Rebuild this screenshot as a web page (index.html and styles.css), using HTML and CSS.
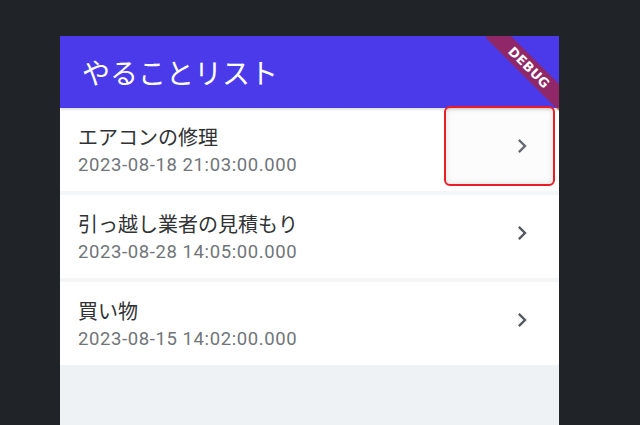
FILE: index.html
```html
<!DOCTYPE html>
<html lang="ja">
<head>
    <meta charset="UTF-8">
    <meta name="viewport" content="width=device-width, initial-scale=1.0">
    <title>やることリスト</title>
    <link rel="stylesheet" href="styles.css">
</head>
<body>

<div class="phone">
    <div class="appbar">
        <h1 class="title">やることリスト</h1>
    </div>

    <div class="list">
        <div class="item">
            <div class="item-text">
                <div class="item-title">エアコンの修理</div>
                <div class="item-date">2023-08-18 21:03:00.000</div>
            </div>
            <svg class="chevron" viewBox="0 0 24 24"><path d="M10 6L8.59 7.41 13.17 12l-4.58 4.59L10 18l6-6z"/></svg>
        </div>
        <div class="item">
            <div class="item-text">
                <div class="item-title">引っ越し業者の見積もり</div>
                <div class="item-date">2023-08-28 14:05:00.000</div>
            </div>
            <svg class="chevron" viewBox="0 0 24 24"><path d="M10 6L8.59 7.41 13.17 12l-4.58 4.59L10 18l6-6z"/></svg>
        </div>
        <div class="item">
            <div class="item-text">
                <div class="item-title">買い物</div>
                <div class="item-date">2023-08-15 14:02:00.000</div>
            </div>
            <svg class="chevron" viewBox="0 0 24 24"><path d="M10 6L8.59 7.41 13.17 12l-4.58 4.59L10 18l6-6z"/></svg>
        </div>
    </div>

    <div class="highlight"></div>
    <div class="debug">DEBUG</div>
</div>

</body>
</html>
```

FILE: styles.css
```css
body {
    margin: 0;
    height: 425px;
    overflow: hidden;
    background-color: #202428;
    font-family: "Noto Sans CJK JP", "Noto Sans", sans-serif;
}
.phone {
    position: relative;
    margin: 36px 0 0 60px;
    width: 499px;
    height: 389px;
    background-color: #eff2f5;
    overflow: hidden;
}
.appbar {
    display: flex;
    align-items: center;
    height: 72px;
    padding-left: 22px;
    background-color: #4a3aea;
    box-shadow: 0 1px 3px rgba(0, 0, 0, 0.2);
    position: relative;
    z-index: 1;
}
.title {
    margin: 0;
    font-size: 28px;
    font-weight: normal;
    color: #ffffff;
}
.list {
    display: flex;
    flex-direction: column;
    gap: 4px;
    background-color: #f4f6f8;
}
.item {
    display: flex;
    align-items: center;
    justify-content: space-between;
    height: 83px;
    padding: 0 23px 0 18px;
    background-color: #ffffff;
}
.item-text {
    display: flex;
    flex-direction: column;
    padding-top: 2px;
}
.item-title {
    font-size: 20px;
    line-height: 26px;
    color: #303234;
}
.item-date {
    margin-top: 3px;
    font-family: Roboto, "Noto Sans", sans-serif;
    font-size: 18.5px;
    letter-spacing: 0.6px;
    line-height: 24px;
    color: #707579;
}
.chevron {
    width: 28px;
    height: 28px;
    margin-bottom: 8px;
    fill: #55595f;
}
.highlight {
    position: absolute;
    left: 384px;
    top: 70px;
    width: 107px;
    height: 76px;
    border: 2px solid #ec1c24;
    border-radius: 6px;
    background: rgba(230, 233, 236, 0.12);
    box-shadow: inset 0 0 6px rgba(0, 0, 0, 0.12);
    z-index: 2;
}
.debug {
    position: absolute;
    left: 417px;
    top: 22px;
    width: 104px;
    height: 19px;
    line-height: 19px;
    transform: rotate(45deg);
    background: rgba(183, 28, 28, 0.63);
    color: #ffffff;
    font-family: "DejaVu Sans", sans-serif;
    font-size: 13px;
    font-weight: bold;
    letter-spacing: 0.3px;
    text-align: center;
    z-index: 3;
}
```
